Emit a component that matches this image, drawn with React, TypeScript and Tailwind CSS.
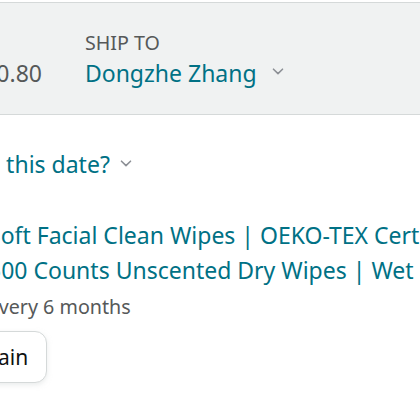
import React from "react";

const Chevron = ({ className }: { className?: string }) => (
  <svg
    width="12"
    height="7"
    viewBox="0 0 12 7"
    fill="none"
    stroke="#8d9096"
    strokeWidth="1.6"
    strokeLinecap="round"
    strokeLinejoin="round"
    className={className}
  >
    <polyline points="1.5,1.2 6,5.6 10.5,1.2" />
  </svg>
);

export default function App() {
  return (
    <div
      className="w-[420px] h-[420px] overflow-hidden bg-white pt-[2px]"
      style={{ fontFamily: '"Noto Sans", Arial, sans-serif' }}
    >
      {/* order header */}
      <div className="box-border h-[113px] border-y border-[#d5d9d9] bg-[#f0f2f2] flex items-start pt-[29.5px] whitespace-nowrap">
        <div className="-ml-[30px] pt-[24px] text-[23px] leading-[32px] text-[#565959]">
          $30.80
        </div>
        <div className="ml-[43px] flex flex-col">
          <span className="text-[19.7px] leading-[20px] text-[#565959] uppercase">
            Ship to
          </span>
          <div className="mt-[4px] flex items-center">
            <span className="text-[23px] leading-[32px] text-[#007185]">
              Dongzhe Zhang
            </span>
            <Chevron className="ml-[15px] -mt-[2px]" />
          </div>
        </div>
      </div>

      {/* order body */}
      <div className="whitespace-nowrap">
        <div className="mt-[33px] -ml-[28px] flex items-center text-[23px] leading-[32px] text-[#007185]">
          <span>on this date?</span>
          <Chevron className="ml-[10px] -mt-[2px]" />
        </div>

        <p className="mt-[37.6px] -ml-[12px] text-[23px] leading-[35px] text-[#007185]">
          Soft Facial Clean Wipes | OEKO-TEX Certified Cotton Tissue
          <br />
          500 Counts Unscented Dry Wipes | Wet and Dry Use
        </p>

        <div className="mt-[5.2px] -ml-[12px] text-[19.7px] leading-[28px] text-[#565959]">
          every 6 months
        </div>

        <div className="mt-[10.2px] -ml-[107px] flex">
          <button className="box-border h-[52px] rounded-[12px] border border-[#d5d9d9] bg-white px-[18px] text-[21px] leading-[50px] text-[#0f1111] shadow-[0_2px_5px_0_rgba(213,217,217,0.5)]">
            Buy it again
          </button>
        </div>
      </div>
    </div>
  );
}
